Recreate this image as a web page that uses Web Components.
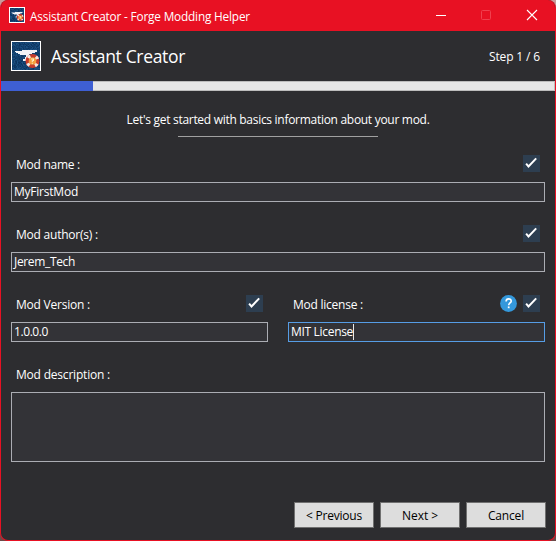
<!DOCTYPE html>
<html lang="en">
<head>
<meta charset="utf-8">
<title>Assistant Creator - Forge Modding Helper</title>
<style>
html,body{margin:0;height:100%;overflow:hidden}
body{background:linear-gradient(#c99a9a 0 50%,#6d4a49 50%);font-family:"Open Sans","Noto Sans",sans-serif;font-size:12px;color:#fff}
</style>
</head>
<body>
<assistant-window></assistant-window>
<script>
const define=(name,html,setup)=>{
  const t=document.createElement('template');t.innerHTML=html;
  customElements.define(name,class extends HTMLElement{
    constructor(){super();this.attachShadow({mode:'open'}).append(t.content.cloneNode(true));}
    connectedCallback(){if(setup)setup(this,this.shadowRoot);}
  });
};

/* A single line of text, tracked to a given width. */
define('fit-text',`<style>:host{display:block;flex:none;white-space:pre;line-height:16px}span{display:inline-block}</style><span></span>`,(el,r)=>{
  const s=r.querySelector('span'),txt=el.getAttribute('text');
  s.textContent=txt;
  const w=parseFloat(el.getAttribute('w'));
  el.style.width=w+'px';
  const natural=s.getBoundingClientRect().width;
  s.style.letterSpacing=((w-natural)/txt.length)+'px';
});

define('mod-logo',`<style>:host{display:block;flex:none;box-sizing:border-box;border:1px solid #fff;background:#123f6c}svg{display:block;width:100%;height:100%}</style>
<svg viewBox="0 0 28 28">
<g id="grain" shape-rendering="crispEdges"></g>
<path fill="#f2f2f6" d="M3 9h7V8h15v2h-2v1h-3v1h-3v4h2v3h-8v-2h2v-2h1v-2H8v-1H6v-1H4v-1H3z"/>
<circle cx="20.5" cy="19" r="5.2" fill="none" stroke="#c93b2b" stroke-width="3.6"/>
<circle cx="20.5" cy="19" r="5.2" fill="none" stroke="#f6e6e0" stroke-width="3.6" stroke-dasharray="2.6 5.57" stroke-dashoffset="-2.8"/>
<circle cx="20.5" cy="19" r="3.8" fill="#f5a040"/>
<path fill="#fff1c4" d="M19 16.5h3v2.6h-1.2v1h-1v-1.8h1v-.8H19zM19.8 20.7h1v1h-1z"/>
</svg>`,(el,r)=>{
  const g=r.querySelector('#grain');let n=7,d=['','',''];
  for(let y=0;y<28;y++)for(let x=0;x<28;x++){n=(n*1103515245+12345)%2147483648;const k=(n>>16)%6;if(k<3)d[k]+=`M${x} ${y}h1v1h-1z`;}
  g.innerHTML=`<path fill="#0d3560" d="${d[0]}"/><path fill="#1b4f80" d="${d[1]}"/><path fill="#174878" d="${d[2]}"/>`;
});

define('check-badge',`<style>:host{display:block;width:17px;height:17px;background:#2d3e50}svg{display:block}</style>
<svg width="17" height="17" viewBox="0 0 17 17"><path d="M3.1 8.6l2.4 2.8L13.2 3.4" fill="none" stroke="#fff" stroke-width="2"/></svg>`);

define('help-badge',`<style>:host{display:block;width:17px;height:17px}svg{display:block}</style>
<svg width="17" height="17" viewBox="0 0 17 17"><circle cx="8.5" cy="8.5" r="8.4" fill="#3498db"/><path d="M6.1 6.5c0-3.5 5.2-3.3 5.1-.3 0 1.7-2.5 1.9-2.5 4" fill="none" stroke="#fff" stroke-width="1.6"/><path d="M7.8 11.4h1.8v1.8H7.8z" fill="#fff"/></svg>`);

define('title-bar',`<style>:host{display:flex;height:31px;box-sizing:border-box;padding:0 17px 0 8px;align-items:center;background:#e81123}
mod-logo{width:16px;height:16px;margin:-1px 5px 0 0}fit-text{font-size:11.8px}svg{display:block;margin:-1px 0 0 auto}</style>
<mod-logo></mod-logo><fit-text text="Assistant Creator - Forge Modding Helper" w="220"></fit-text>
<svg width="102" height="12" viewBox="0 0 102 12"><path d="M0 6.5h10" stroke="#fff"/><rect x="45.5" y="1.5" width="9" height="9" rx="1" fill="none" stroke="#f0404e"/><path d="M91 1l10 10M101 1L91 11" stroke="#fff" stroke-width="1.1"/></svg>`);

define('page-header',`<style>:host{display:flex;height:50px;box-sizing:border-box;padding:0 15px 0 10px;align-items:center}
mod-logo{width:30px;height:30px;margin-right:10px}.t{font-size:17.5px;line-height:24px;margin-top:-1px}.s{margin:2px 0 0 auto}</style>
<mod-logo></mod-logo><fit-text class="t" text="Assistant Creator" w="134"></fit-text><fit-text class="s" text="Step 1 / 6" w="51"></fit-text>`);

define('step-progress',`<style>:host{display:block;height:10px;box-sizing:border-box;background:#e6e6e6;border:1px solid #bcbcbc;border-left:0}div{width:92px;height:10px;margin-top:-1px;background:#3e5fd3}</style><div></div>`);

define('form-field',`<style>:host{display:block;min-width:0}
.l{display:flex;height:17px;padding:0 5px;gap:6px;align-items:center;margin-bottom:10px}.l fit-text{margin:2px auto 0 0}
.b{box-sizing:border-box;height:var(--h,20px);border:1px solid var(--edge,#abadb3);background:#333337;padding:1px 0 0 2px;display:flex}
.caret{width:1px;height:16px;background:#e8e8e8}</style>
<div class="l"><slot></slot></div><div class="b"></div>`,(el,r)=>{
  const mk=(t,w)=>{const f=document.createElement('fit-text');f.setAttribute('text',t);f.setAttribute('w',w);return f;};
  r.querySelector('.l').prepend(mk(el.getAttribute('label'),el.getAttribute('lw')));
  if(el.hasAttribute('value'))r.querySelector('.b').append(mk(el.getAttribute('value'),el.getAttribute('vw')));
  if(el.hasAttribute('focused')){const c=document.createElement('div');c.className='caret';r.querySelector('.b').append(c);}
});

define('push-button',`<style>:host{display:flex;justify-content:center;align-items:center;width:80px;height:26px;box-sizing:border-box;border:1px solid #707070;background:#ddd;color:#000;padding-top:2px}</style><slot></slot>`);

define('assistant-window',`<style>:host{display:flex;flex-direction:column;box-sizing:border-box;width:556px;height:541px;border:1px solid #e81123;border-top:0;border-radius:8px;overflow:hidden;background:#2d2d30}
.intro{display:flex;flex-direction:column;align-items:center;padding-top:21px;height:64px;box-sizing:border-box}.intro i{width:200px;height:1px;background:#a0a0a0;margin-top:8px}
.form{display:grid;grid-template-columns:1fr 1fr;column-gap:20px;row-gap:23px;padding:0 10px}.wide{grid-column:1/-1}
.desc{--h:70px}.focus{--edge:#569de5}
footer{display:flex;justify-content:flex-end;gap:6px;padding:40px 9px 0 0}</style>
<title-bar></title-bar><page-header></page-header><step-progress></step-progress>
<div class="intro"><fit-text text="Let's get started with basics information about your mod." w="303"></fit-text><i></i></div>
<div class="form">
<form-field class="wide" label="Mod name :" lw="64" value="MyFirstMod" vw="64"><check-badge></check-badge></form-field>
<form-field class="wide" label="Mod author(s) :" lw="82" value="Jerem_Tech" vw="61"><check-badge></check-badge></form-field>
<form-field label="Mod Version :" lw="74" value="1.0.0.0" vw="34"><check-badge></check-badge></form-field>
<form-field class="focus" label="Mod license :" lw="70" value="MIT License" vw="62" focused><help-badge></help-badge><check-badge></check-badge></form-field>
<form-field class="wide desc" label="Mod description :" lw="94"></form-field>
</div>
<footer><push-button><fit-text text="&lt; Previous" w="56"></fit-text></push-button><push-button><fit-text text="Next &gt;" w="36"></fit-text></push-button><push-button><fit-text text="Cancel" w="36"></fit-text></push-button></footer>`);
</script>
</body>
</html>
